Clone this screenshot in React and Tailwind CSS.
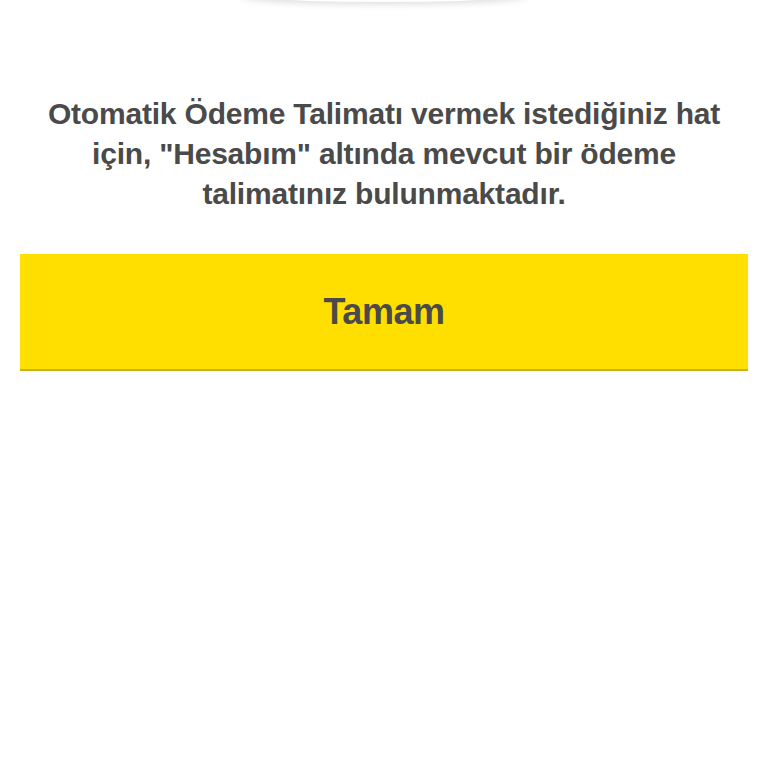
export default function App() {
  return (
    <div className="relative min-h-[768px] w-full bg-white" style={{ fontFamily: '"Liberation Sans", Arial, sans-serif' }}>
      <div className="absolute left-1/2 top-[-14px] h-[16px] w-[290px] -translate-x-1/2 rounded-[50%] bg-white shadow-[0_2px_7px_rgba(0,0,0,0.14)]" />
      <div className="px-5 pt-[94px]">
        <p className="mx-auto max-w-[710px] text-center text-[30px] font-bold leading-[40px] tracking-[-0.2px] text-[#4a4a4a]">
          Otomatik Ödeme Talimatı vermek istediğiniz hat için, "Hesabım" altında mevcut bir ödeme talimatınız bulunmaktadır.
        </p>
        <button
          type="button"
          className="mt-[40px] flex h-[117px] w-full items-center justify-center border-b-2 border-[#c9b21a] bg-[#ffdf00] text-[36px] font-bold tracking-[-0.5px] text-[#4a4a4a]"
        >
          Tamam
        </button>
      </div>
    </div>
  );
}
